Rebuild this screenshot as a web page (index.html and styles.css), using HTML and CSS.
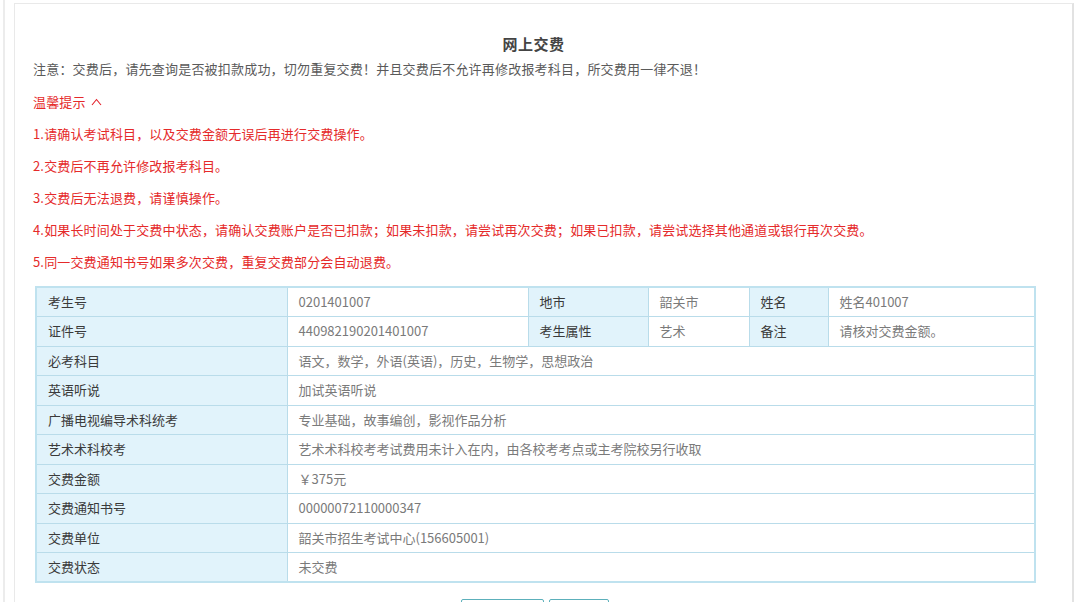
FILE: index.html
```html
<!DOCTYPE html>
<html lang="zh-CN">
<head>
  <meta charset="UTF-8" />
  <title>网上交费</title>
  <link rel="stylesheet" href="styles.css">
</head>
<body>
  <div class="page">
    <div class="panel">
      <h2 class="title">网上交费</h2>
      <p class="notice">注意：交费后，请先查询是否被扣款成功，切勿重复交费！并且交费后不允许再修改报考科目，所交费用一律不退！</p>

      <!-- 温馨提示 -->
      <div class="tips">
        <div class="tips-head">温馨提示
          <svg class="caret" width="11" height="8" viewBox="0 0 11 8"><path d="M1 7 L5.5 1.5 L10 7" fill="none" stroke="#e4202a" stroke-width="1.1"/></svg>
        </div>
        <p>1.请确认考试科目，以及交费金额无误后再进行交费操作。</p>
        <p>2.交费后不再允许修改报考科目。</p>
        <p>3.交费后无法退费，请谨慎操作。</p>
        <p>4.如果长时间处于交费中状态，请确认交费账户是否已扣款；如果未扣款，请尝试再次交费；如果已扣款，请尝试选择其他通道或银行再次交费。</p>
        <p>5.同一交费通知书号如果多次交费，重复交费部分会自动退费。</p>
      </div>

      <table class="info">
        <colgroup>
          <col style="width:251px"><col style="width:241px"><col style="width:120px">
          <col style="width:101px"><col style="width:79px"><col style="width:207px">
        </colgroup>
        <tr>
          <th>考生号</th><td>0201401007</td>
          <th>地市</th><td>韶关市</td>
          <th>姓名</th><td>姓名401007</td>
        </tr>
        <tr>
          <th>证件号</th><td>440982190201401007</td>
          <th>考生属性</th><td>艺术</td>
          <th>备注</th><td>请核对交费金额。</td>
        </tr>
        <tr><th>必考科目</th><td colspan="5">语文，数学，外语(英语)，历史，生物学，思想政治</td></tr>
        <tr><th>英语听说</th><td colspan="5">加试英语听说</td></tr>
        <tr><th>广播电视编导术科统考</th><td colspan="5">专业基础，故事编创，影视作品分析</td></tr>
        <tr><th>艺术术科校考</th><td colspan="5">艺术术科校考考试费用未计入在内，由各校考考点或主考院校另行收取</td></tr>
        <tr><th>交费金额</th><td colspan="5">￥375元</td></tr>
        <tr><th>交费通知书号</th><td colspan="5">00000072110000347</td></tr>
        <tr><th>交费单位</th><td colspan="5">韶关市招生考试中心(156605001)</td></tr>
        <tr><th>交费状态</th><td colspan="5">未交费</td></tr>
      </table>

      <div class="actions">
        <button class="btn btn-wide"></button>
        <button class="btn"></button>
      </div>
    </div>
  </div>
</body>
</html>
```

FILE: styles.css
```css
body {
  margin: 0;
  padding: 0;
  background: #fff;
  font-family: "Noto Sans CJK SC", "Noto Sans", sans-serif;
  color: #333;
  overflow: hidden;
}

.page {
  height: 602px;
  margin-left: 3px;
  border-left: 2px solid #ececec;
  padding: 3px 0 0 9px;
  box-sizing: border-box;
  overflow: hidden;
}

.panel {
  width: 1060px;
  height: 599px;
  border: 1px solid #e9e9e9;
  border-bottom: none;
  border-right: 2px solid #e2e2e2;
  box-sizing: border-box;
  padding: 29px 38px 0 18px;
  overflow: hidden;
}

.title {
  margin: 0;
  text-align: center;
  font-size: 15px;
  line-height: 22px;
  font-weight: bold;
  color: #444;
  letter-spacing: 0.5px;
}

.notice {
  margin: 4px 0 0;
  font-size: 13px;
  line-height: 20px;
  color: #5a5a5a;
  letter-spacing: 0.2px;
}

.tips {
  color: #e52a2a;
  font-size: 13px;
  line-height: 20px;
  letter-spacing: 0.15px;
}

.tips-head {
  margin-top: 13px;
  display: flex;
  align-items: center;
  gap: 5px;
}

.caret {
  margin-top: -1px;
}

.tips p {
  margin: 12px 0 0;
}

.info {
  margin: 14px 0 0 2px;
  width: 999px;
  border-collapse: collapse;
  table-layout: fixed;
  border: 2px solid #bfe2ef;
  font-size: 13px;
}

.info tr {
  height: 29.5px;
}

.info th,
.info td {
  border: 1px solid #b9dcea;
  padding: 0 11px;
  text-align: left;
  font-weight: normal;
  white-space: nowrap;
  line-height: 20px;
}

.info th {
  background: #e1f3fb;
  color: #3a3a3a;
}

.info td {
  color: #7a7a7a;
  background: #fff;
}

.actions {
  width: 999px;
  margin: 16px 0 0 2px;
  display: flex;
  justify-content: center;
  gap: 5px;
}

.btn {
  width: 60px;
  height: 30px;
  border: 1px solid #5cb0bb;
  background: #fff;
  border-radius: 2px;
}

.btn-wide {
  width: 83px;
}
```
